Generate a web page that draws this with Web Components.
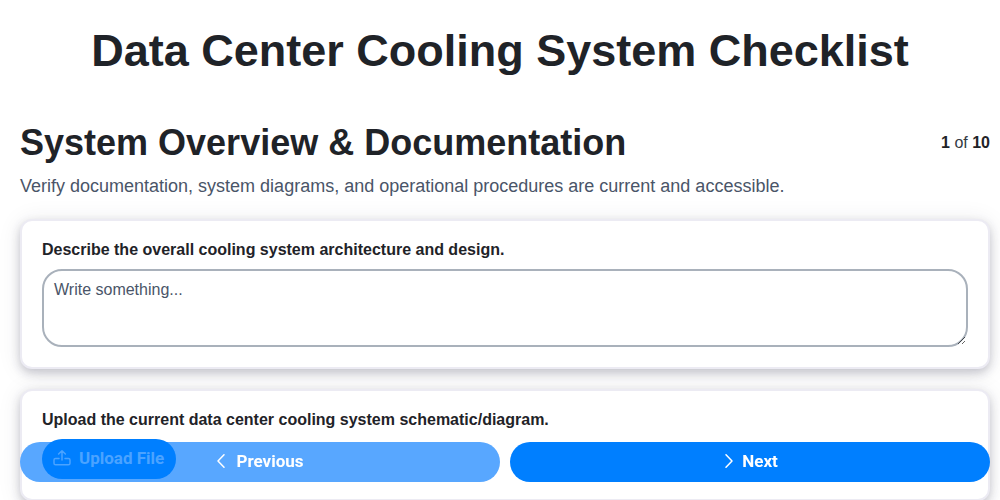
<!DOCTYPE html>
<html lang="en">
<head>
<meta charset="utf-8">
<title>Data Center Cooling System Checklist</title>
<style>
  html, body { height: 100%; }
  body {
    margin: 0;
    overflow: hidden;
    background: #fff;
    color: #1f2328;
    font-family: "Liberation Sans", Arial, sans-serif;
  }
</style>
</head>
<body>
<checklist-page>
  <section-head slot="head" title="System Overview &amp; Documentation" current="1" total="10">
    Verify documentation, system diagrams, and operational procedures are current and accessible.
  </section-head>
  <question-card label="Describe the overall cooling system architecture and design.">
    <text-answer placeholder="Write something..."></text-answer>
  </question-card>
  <question-card label="Upload the current data center cooling system schematic/diagram.">
    <upload-button>Upload File</upload-button>
  </question-card>
</checklist-page>
<nav-bar>
  <nav-button dir="prev" disabled>Previous</nav-button>
  <nav-button dir="next">Next</nav-button>
</nav-bar>

<script>
class ChecklistPage extends HTMLElement {
  connectedCallback() {
    this.attachShadow({mode: 'open'}).innerHTML = `
      <style>
        :host { display: block; }
        h1 {
          margin: 0;
          padding: 25px 0 44px;
          font-size: 45px;
          line-height: 52px;
          font-weight: 700;
          text-align: center;
        }
        main { padding: 0 10px 0 20px; }
        .cards { display: flex; flex-direction: column; gap: 20px; }
      </style>
      <h1>Data Center Cooling System Checklist</h1>
      <main>
        <slot name="head"></slot>
        <div class="cards"><slot></slot></div>
      </main>
    `;
  }
}
customElements.define('checklist-page', ChecklistPage);

class SectionHead extends HTMLElement {
  connectedCallback() {
    this.attachShadow({mode: 'open'}).innerHTML = `
      <style>
        :host { display: block; margin-bottom: 21px; }
        .top { display: flex; justify-content: space-between; align-items: center; }
        h2 { margin: 0; font-size: 36px; line-height: 44px; font-weight: 700; }
        .count { font-size: 16px; color: #333a42; }
        b { color: #1f2328; }
        p { margin: 9px 0 0; font-size: 18px; line-height: 24px; color: #4a5568; }
      </style>
      <div class="top">
        <h2>${this.getAttribute('title')}</h2>
        <span class="count"><b>${this.getAttribute('current')}</b> of <b>${this.getAttribute('total')}</b></span>
      </div>
      <p><slot></slot></p>
    `;
    this.removeAttribute('title');
  }
}
customElements.define('section-head', SectionHead);

class QuestionCard extends HTMLElement {
  connectedCallback() {
    this.attachShadow({mode: 'open'}).innerHTML = `
      <style>
        :host {
          display: block;
          box-sizing: border-box;
          background: #fff;
          border: 2px solid #ecebf3;
          border-radius: 12px;
          padding: 20px;
          box-shadow: 0 4px 10px rgba(40, 40, 70, 0.24), 0 2px 24px rgba(40, 40, 70, 0.09);
        }
        label { display: block; font-size: 16px; line-height: 18px; font-weight: 700; margin-bottom: 10px; }
      </style>
      <label>${this.getAttribute('label')}</label>
      <slot></slot>
    `;
  }
}
customElements.define('question-card', QuestionCard);

class TextAnswer extends HTMLElement {
  connectedCallback() {
    this.attachShadow({mode: 'open'}).innerHTML = `
      <style>
        :host { display: block; }
        textarea {
          display: block;
          box-sizing: border-box;
          width: 100%;
          height: 78px;
          padding: 10px;
          border: 2px solid #a9b1bb;
          border-radius: 20px;
          outline: none;
          font: 16px/18px "Liberation Sans", Arial, sans-serif;
          color: #333;
        }
        textarea::placeholder { color: #4a5568; opacity: 1; }
      </style>
      <textarea placeholder="${this.getAttribute('placeholder')}"></textarea>
    `;
  }
}
customElements.define('text-answer', TextAnswer);

class UploadButton extends HTMLElement {
  connectedCallback() {
    this.attachShadow({mode: 'open'}).innerHTML = `
      <style>
        :host { display: inline-block; position: relative; z-index: 2; }
        button {
          display: flex;
          align-items: center;
          gap: 8px;
          height: 40px;
          width: 134px;
          padding: 0 0 2px 11px;
          border: 0;
          border-radius: 20px;
          background: #007fff;
          color: #4ba3ff;
          font: 700 17px Roboto, "Liberation Sans", sans-serif;
        }
        svg { width: 18px; height: 18px; flex: none; }
      </style>
      <button type="button">
        <svg viewBox="0 0 18 18" fill="none" stroke="currentColor" stroke-width="1.5" stroke-linecap="round" stroke-linejoin="round">
          <path d="M9 11V1.8M5.6 5 9 1.8 12.4 5"/>
          <path d="M6 9.4H2.6Q1 9.4 1 11v3.2q0 1.6 1.6 1.6h12.8q1.6 0 1.6-1.6V11q0-1.6-1.6-1.6H12"/>
        </svg>
        <slot></slot>
      </button>
    `;
  }
}
customElements.define('upload-button', UploadButton);

class NavBar extends HTMLElement {
  connectedCallback() {
    this.attachShadow({mode: 'open'}).innerHTML = `
      <style>
        :host {
          display: flex;
          gap: 10px;
          position: fixed;
          left: 20px;
          right: 10px;
          bottom: 18px;
          z-index: 1;
        }
        ::slotted(*) { flex: 1; }
      </style>
      <slot></slot>
    `;
  }
}
customElements.define('nav-bar', NavBar);

class NavButton extends HTMLElement {
  connectedCallback() {
    const isPrev = this.getAttribute('dir') == 'prev';
    const chevron = isPrev ? 'M8 .8 2 7l6 6.2' : 'M4 .8 10 7l-6 6.2';
    this.attachShadow({mode: 'open'}).innerHTML = `
      <style>
        :host { display: block; }
        button {
          display: flex;
          align-items: center;
          justify-content: center;
          gap: 8px;
          width: 100%;
          height: 40px;
          padding: 0 0 2px;
          border: 0;
          border-radius: 20px;
          background: ${this.hasAttribute('disabled') ? '#58a7ff' : '#007fff'};
          color: #fff;
          font: 700 17px Roboto, "Liberation Sans", sans-serif;
        }
        svg { width: 12px; height: 14px; }
      </style>
      <button type="button">
        <svg viewBox="0 0 12 14" fill="none" stroke="currentColor" stroke-width="1.5" stroke-linecap="round" stroke-linejoin="round"><path d="${chevron}"/></svg>
        <slot></slot>
      </button>
    `;
  }
}
customElements.define('nav-button', NavButton);
</script>
</body>
</html>
